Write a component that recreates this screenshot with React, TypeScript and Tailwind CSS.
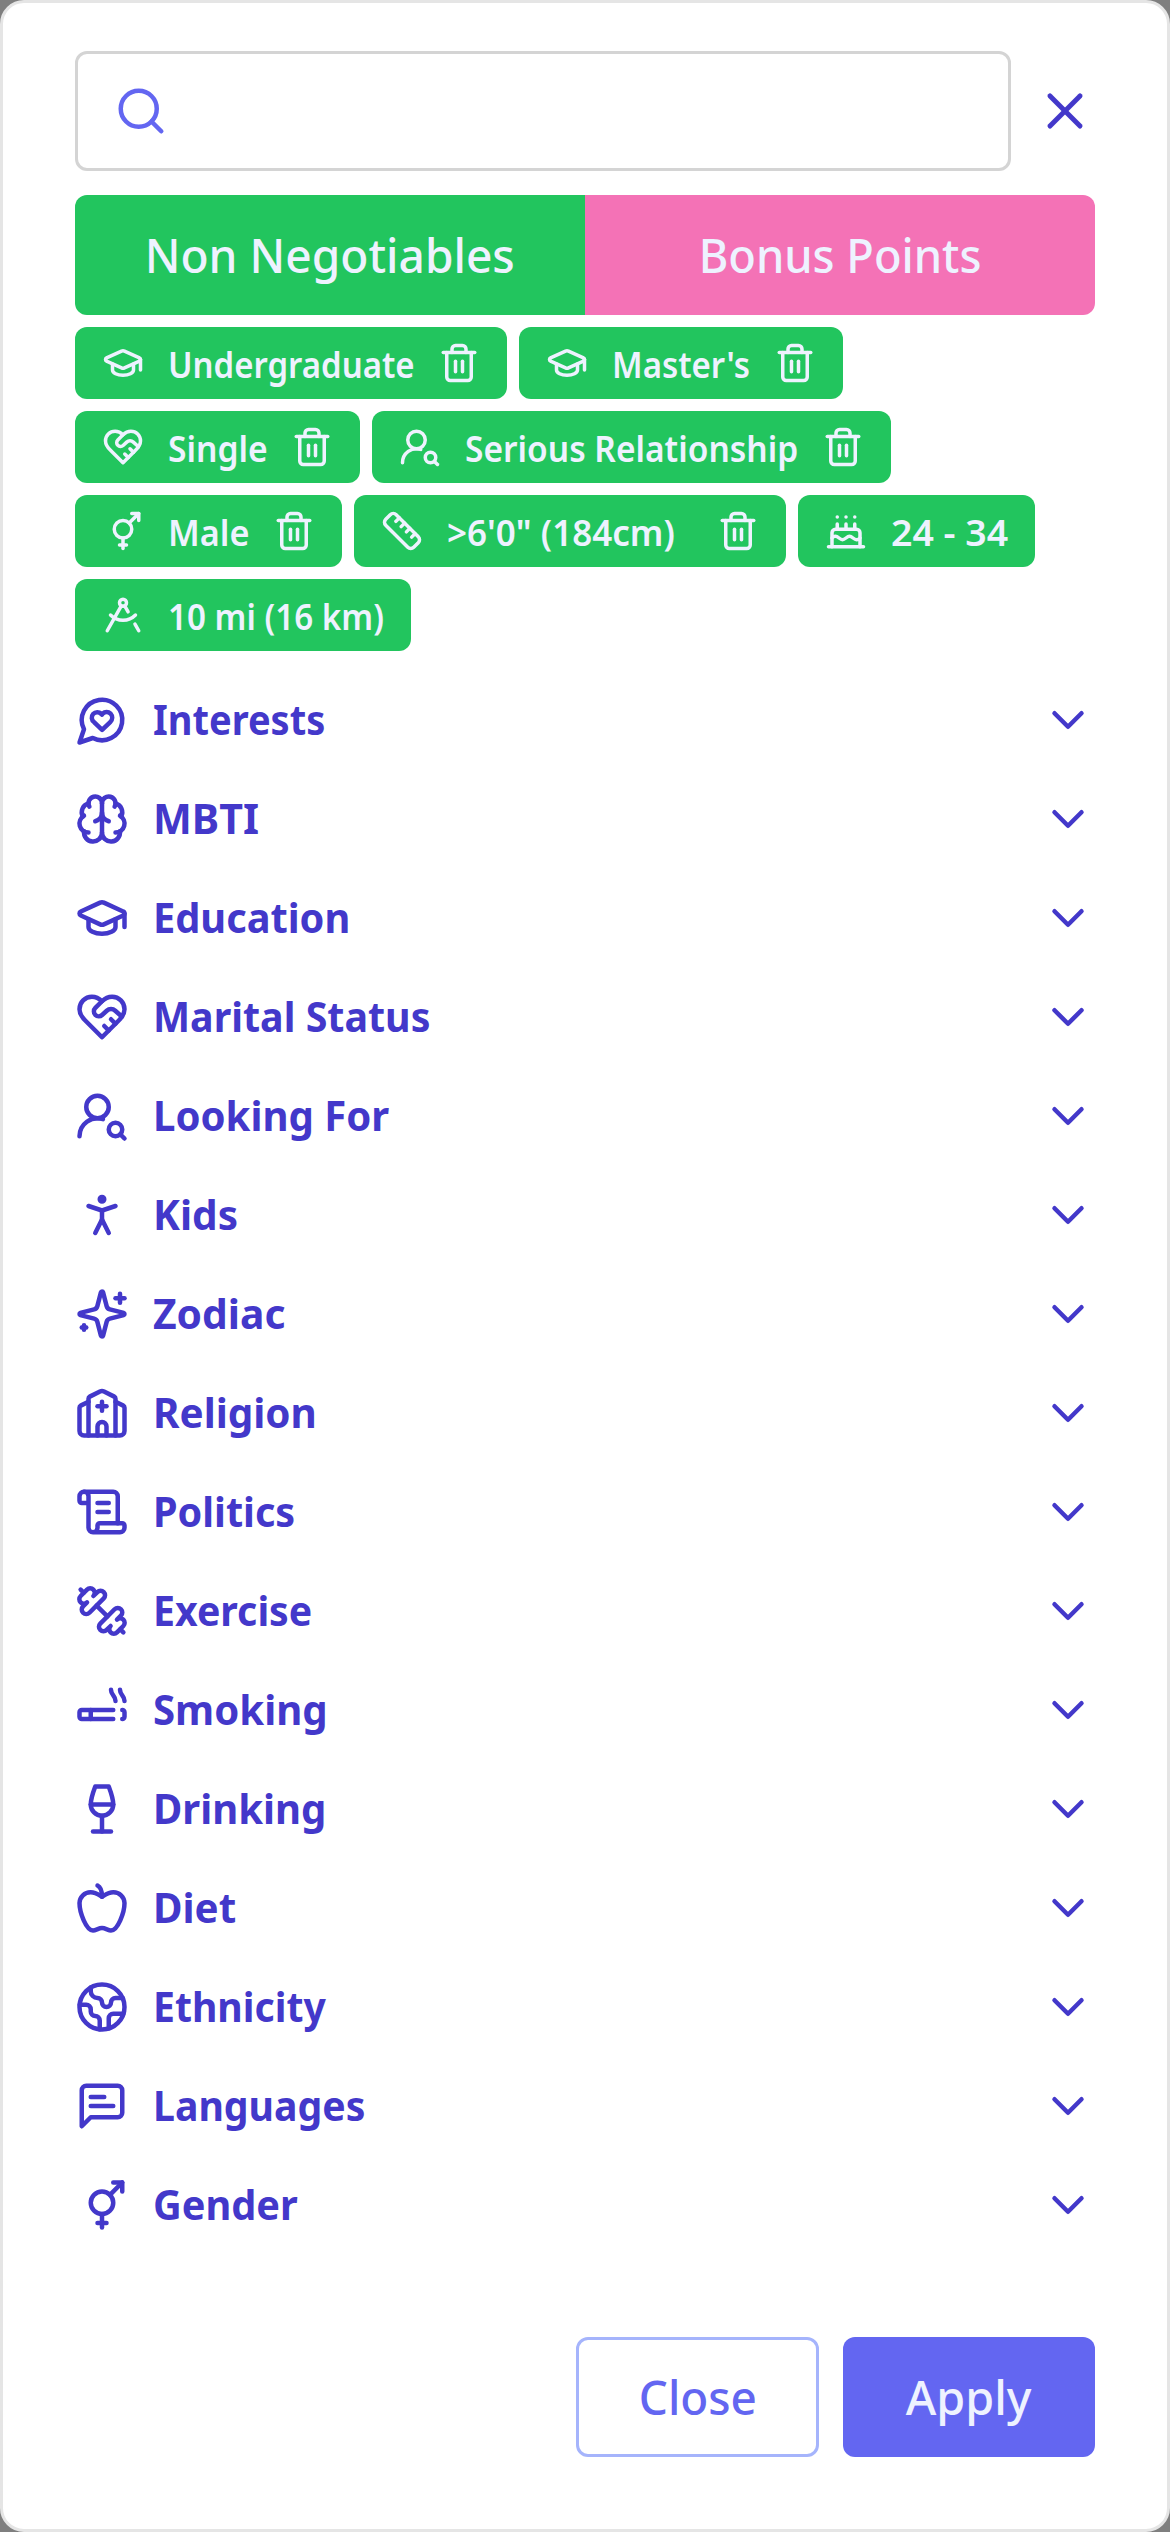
import React from "react";
import {
  Brain,
  Cake,
  ChevronDown,
  Cigarette,
  DraftingCompass,
  Earth,
  GraduationCap,
  PersonStanding,
  Ruler,
  ScrollText,
  Search,
  Trash2,
  UserRoundSearch,
  VenusAndMars,
  Wine,
  X,
} from "lucide-react";

type IconProps = { className?: string };
type IconType = React.ComponentType<IconProps>;

function outline(paths: string[]): IconType {
  return function OutlineIcon({ className }: IconProps) {
    return (
      <svg
        viewBox="0 0 24 24"
        fill="none"
        stroke="currentColor"
        strokeWidth={2}
        strokeLinecap="round"
        strokeLinejoin="round"
        className={className}
      >
        {paths.map((d) => (
          <path key={d} d={d} />
        ))}
      </svg>
    );
  };
}

const ChatHeart = outline([
  "M7.9 20A9 9 0 1 0 4 16.1L2 22Z",
  "M15.8 9.2a2.5 2.5 0 0 0-3.5 0l-.3.4-.35-.3a2.42 2.42 0 1 0-3.2 3.6l3.6 3.5 3.6-3.5c1.2-1.2 1.1-2.7.2-3.7",
]);

const HeartShake = outline([
  "M19 14c1.49-1.46 3-3.21 3-5.5A5.5 5.5 0 0 0 16.5 3c-1.76 0-3 .5-4.5 2-1.5-1.5-2.74-2-4.5-2A5.5 5.5 0 0 0 2 8.5c0 2.3 1.5 4.05 3 5.5l7 7Z",
  "M12 5 9.04 7.96a2.17 2.17 0 0 0 0 3.08c.82.82 2.13.85 3 .07l2.07-1.9a2.82 2.82 0 0 1 3.79 0l2.96 2.66",
  "m18 15-2-2",
  "m15 18-2-2",
]);

const Sparkle = outline([
  "M9.937 15.5A2 2 0 0 0 8.5 14.063l-6.135-1.582a.5.5 0 0 1 0-.962L8.5 9.936A2 2 0 0 0 9.937 8.5l1.582-6.135a.5.5 0 0 1 .963 0L14.063 8.5A2 2 0 0 0 15.5 9.937l6.135 1.581a.5.5 0 0 1 0 .964L15.5 14.063a2 2 0 0 0-1.437 1.437l-1.582 6.135a.5.5 0 0 1-.963 0z",
  "M20 3v4",
  "M22 5h-4",
  "M4 17v2",
  "M5 18H3",
]);

const Chapel = outline([
  "M10 9h4",
  "M12 7v4",
  "M14 22v-4a2 2 0 0 0-4 0v4",
  "M18 22V5.618a1 1 0 0 0-.553-.894l-4.553-2.277a2 2 0 0 0-1.788 0L6.553 4.724A1 1 0 0 0 6 5.618V22",
  "m18 7 3.447 1.724a1 1 0 0 1 .553.894V20a2 2 0 0 1-2 2H4a2 2 0 0 1-2-2V9.618a1 1 0 0 1 .553-.894L6 7",
]);

const Weights = outline([
  "M14.4 14.4 9.6 9.6",
  "M18.657 21.485a2 2 0 1 1-2.829-2.828l-1.767 1.768a2 2 0 1 1-2.829-2.829l6.364-6.364a2 2 0 1 1 2.829 2.829l-1.768 1.767a2 2 0 1 1 2.828 2.829z",
  "m21.5 21.5-1.4-1.4",
  "M3.9 3.9 2.5 2.5",
  "M6.404 12.768a2 2 0 1 1-2.829-2.829l1.768-1.767a2 2 0 1 1-2.828-2.829l2.828-2.828a2 2 0 1 1 2.829 2.828l1.767-1.768a2 2 0 1 1 2.829 2.829z",
]);

const Fruit = outline([
  "M12 20.94c1.5 0 2.75 1.06 4 1.06 3 0 6-8 6-12.22A4.91 4.91 0 0 0 17 5c-2.22 0-4 1.44-5 2-1-.56-2.78-2-5-2a4.9 4.9 0 0 0-5 4.78C2 14 5 22 8 22c1.25 0 2.5-1.06 4-1.06Z",
  "M10 2c1 .5 2 2 2 5",
]);

const ChatText = outline([
  "M21 15a2 2 0 0 1-2 2H7l-4 4V5a2 2 0 0 1 2-2h14a2 2 0 0 1 2 2z",
  "M13 8H7",
  "M17 12H7",
]);

type Chip = { label: string; icon: IconType; width: string; text: string; removable: boolean };

const chipRows: Chip[][] = [
  [
    { label: "Undergraduate", icon: GraduationCap, width: "w-[432px]", text: "scale-x-[0.915]", removable: true },
    { label: "Master's", icon: GraduationCap, width: "w-[324px]", text: "scale-x-[0.916]", removable: true },
  ],
  [
    { label: "Single", icon: HeartShake, width: "w-[285px]", text: "scale-x-[0.935]", removable: true },
    { label: "Serious Relationship", icon: UserRoundSearch, width: "w-[519px]", text: "scale-x-[0.931]", removable: true },
  ],
  [
    { label: "Male", icon: VenusAndMars, width: "w-[267px]", text: "scale-x-[0.95]", removable: true },
    { label: ">6'0\" (184cm)", icon: Ruler, width: "w-[432px]", text: "scale-x-[0.973]", removable: true },
    { label: "24 - 34", icon: Cake, width: "w-[237px]", text: "scale-x-[1.04]", removable: false },
  ],
  [{ label: "10 mi (16 km)", icon: DraftingCompass, width: "w-[336px]", text: "scale-x-[0.922]", removable: false }],
];

const sections: { label: string; icon: IconType; text: string }[] = [
  { label: "Interests", icon: ChatHeart, text: "scale-x-[0.905]" },
  { label: "MBTI", icon: Brain, text: "scale-x-[0.98]" },
  { label: "Education", icon: GraduationCap, text: "scale-x-[0.946]" },
  { label: "Marital Status", icon: HeartShake, text: "scale-x-[0.937]" },
  { label: "Looking For", icon: UserRoundSearch, text: "scale-x-[0.955]" },
  { label: "Kids", icon: PersonStanding, text: "scale-x-[0.965]" },
  { label: "Zodiac", icon: Sparkle, text: "scale-x-[0.97]" },
  { label: "Religion", icon: Chapel, text: "scale-x-[0.962]" },
  { label: "Politics", icon: ScrollText, text: "scale-x-[0.942]" },
  { label: "Exercise", icon: Weights, text: "scale-x-[0.935]" },
  { label: "Smoking", icon: Cigarette, text: "scale-x-[0.955]" },
  { label: "Drinking", icon: Wine, text: "scale-x-[0.953]" },
  { label: "Diet", icon: Fruit, text: "scale-x-[0.96]" },
  { label: "Ethnicity", icon: Earth, text: "scale-x-[0.932]" },
  { label: "Languages", icon: ChatText, text: "scale-x-[0.933]" },
  { label: "Gender", icon: VenusAndMars, text: "scale-x-[0.945]" },
];

function FilterChip({ chip }: { chip: Chip }) {
  const Icon = chip.icon;
  return (
    <div className={`flex h-[72px] items-center rounded-xl bg-[#22c55e] px-[27px] text-[#eef2ff] ${chip.width}`}>
      <Icon className="size-[42px] shrink-0" />
      <div className="ml-6 min-w-0 flex-1 pt-[3px] text-[36px] leading-[48px] font-semibold">
        <span className={`inline-block origin-left whitespace-pre ${chip.text}`}>{chip.label}</span>
      </div>
      {chip.removable && <Trash2 className="size-[42px] shrink-0" />}
    </div>
  );
}

export default function App() {
  return (
    <div className="h-[2532px] w-[1170px] bg-[#7f7f7f] font-['Noto_Sans','Open_Sans',sans-serif]">
      <div className="flex h-full flex-col rounded-[24px] border-[3px] border-[#e5e5e5] bg-white px-[72px] pt-12 pb-[72px]">
        <div className="flex h-[120px] items-center justify-between">
          <div className="flex h-[120px] w-[936px] items-center rounded-xl border-[3px] border-[#d4d4d4] pl-9">
            <Search className="size-[54px] text-[#6366f1]" />
          </div>
          <X className="size-[60px] text-[#4338ca]" />
        </div>

        <div className="mt-6 grid h-[120px] grid-cols-2 overflow-hidden rounded-xl text-[48px] font-medium text-[#eef2ff]">
          <button className="bg-[#22c55e]">
            <span className="inline-block scale-x-[0.96]">Non Negotiables</span>
          </button>
          <button className="bg-[#f472b6]">
            <span className="inline-block scale-x-[0.942]">Bonus Points</span>
          </button>
        </div>

        <div className="mt-3 flex flex-col gap-3">
          {chipRows.map((row, i) => (
            <div key={i} className="flex gap-3">
              {row.map((chip) => (
                <FilterChip key={chip.label} chip={chip} />
              ))}
            </div>
          ))}
        </div>

        <div className="mt-[19px] flex flex-col text-[#4338ca]">
          {sections.map(({ label, icon: Icon, text }) => (
            <div key={label} className="flex h-[99px] items-center">
              <Icon className="size-[54px] shrink-0" />
              <div className="ml-6 min-w-0 flex-1 pb-[2px] text-[42px] leading-[60px] font-bold">
                <span className={`inline-block origin-left whitespace-pre ${text}`}>{label}</span>
              </div>
              <ChevronDown className="size-[54px] shrink-0" />
            </div>
          ))}
        </div>

        <div className="mt-auto flex h-[120px] justify-end gap-6 text-[48px] font-medium">
          <button className="w-[243px] rounded-xl border-[3px] border-[#a5b4fc] text-[#6366f1]">
            <span className="inline-block scale-x-[0.955]">Close</span>
          </button>
          <button className="w-[252px] rounded-xl bg-[#6366f1] text-[#eef2ff]">
            <span className="inline-block scale-x-[0.973]">Apply</span>
          </button>
        </div>
      </div>
    </div>
  );
}
